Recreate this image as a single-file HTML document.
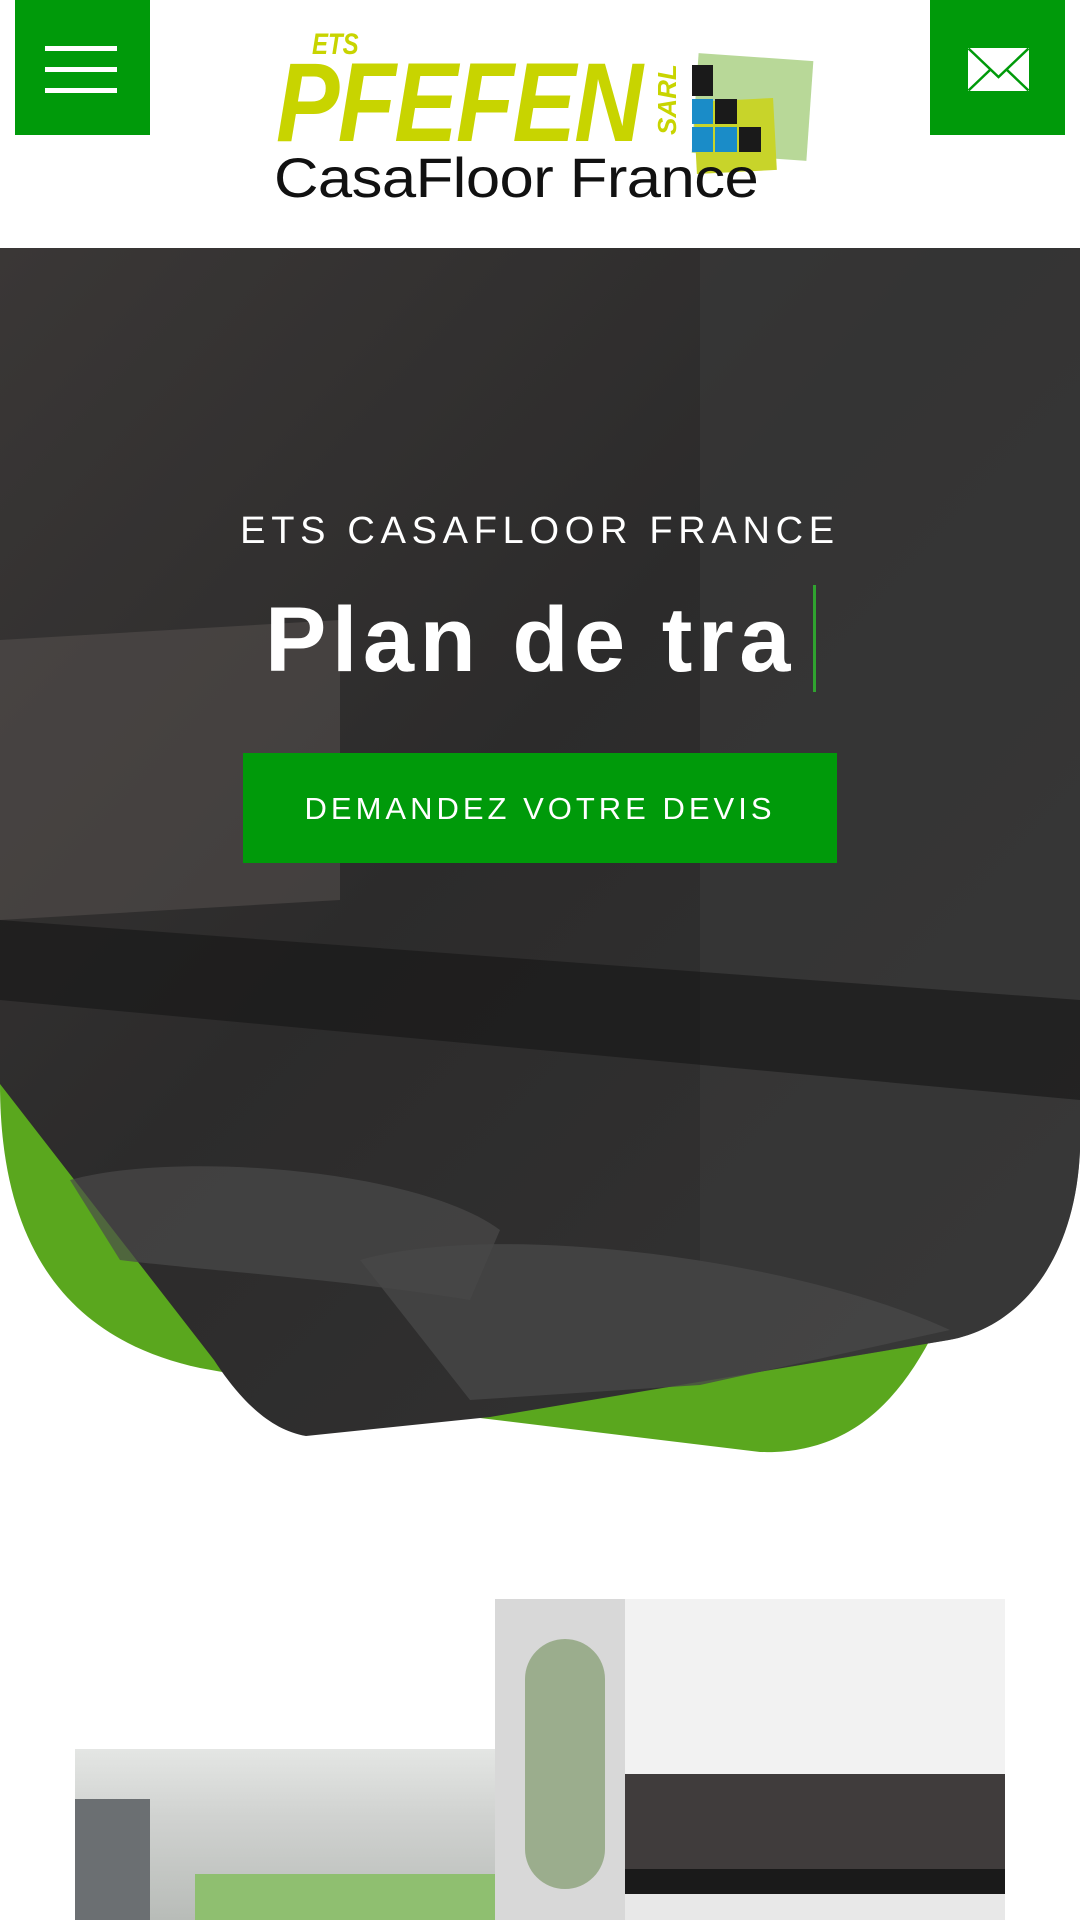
<!DOCTYPE html>
<html><head><meta charset="utf-8"><style>
*{margin:0;padding:0;box-sizing:border-box}
html,body{width:1080px;height:1920px;overflow:hidden;background:#fff;font-family:"Liberation Sans",sans-serif}
.btn{position:absolute;top:0;width:135px;height:135px;background:#009a0a}
.abs{position:absolute}
</style></head><body>
<div class="btn" style="left:15px">
 <div class="abs" style="left:30px;top:46px;width:72px;height:5px;background:#fff"></div>
 <div class="abs" style="left:30px;top:67px;width:72px;height:5px;background:#fff"></div>
 <div class="abs" style="left:30px;top:88px;width:72px;height:5px;background:#fff"></div>
</div>
<div class="btn" style="left:930px">
 <svg class="abs" style="left:37px;top:47px" width="63" height="45" viewBox="0 0 63 45"><rect x="1.5" y="1.5" width="60" height="42" fill="#fff" stroke="#fff"/><path d="M1.5 1.5 L31.5 30 L61.5 1.5 M1.5 43.5 L24 22 M61.5 43.5 L39 22" stroke="#009a0a" stroke-width="2.5" fill="none"/></svg>
</div>
<!-- logo -->
<div class="abs" style="left:695px;top:57px;width:115px;height:100px;background:#b8d898;transform:rotate(4deg)"></div>
<div class="abs" style="left:695px;top:100px;width:80px;height:72px;background:#c8d42a;transform:rotate(-3deg)"></div>
<div class="abs" style="left:692px;top:65px;width:21px;height:31px;background:#1a1a1a"></div>
<div class="abs" style="left:692px;top:99px;width:21px;height:25px;background:#1a8cc8"></div>
<div class="abs" style="left:715px;top:99px;width:22px;height:25px;background:#1a1a1a"></div>
<div class="abs" style="left:692px;top:127px;width:21px;height:25px;background:#1a8cc8"></div>
<div class="abs" style="left:715px;top:127px;width:22px;height:25px;background:#1a8cc8"></div>
<div class="abs" style="left:739px;top:127px;width:22px;height:25px;background:#1a1a1a"></div>
<div class="abs" style="left:312px;top:28px;font-size:30px;font-style:italic;font-weight:bold;color:#c8d400;transform:scaleX(.8);transform-origin:left">ETS</div>
<div class="abs" style="left:276px;top:47px;font-size:112px;font-weight:bold;font-style:italic;color:#c8d400;letter-spacing:-2px;transform:scaleX(.85);transform-origin:left;line-height:1">PFEFEN</div>
<div class="abs" style="left:652px;top:135px;font-size:26px;font-weight:bold;font-style:italic;color:#c8d400;transform:rotate(-90deg);transform-origin:left top;">SARL</div>
<div class="abs" style="left:274px;top:150px;font-size:56px;color:#111;transform:scaleX(1.1);transform-origin:left;line-height:1;letter-spacing:-0.5px">CasaFloor France</div>
<!-- hero -->
<svg class="abs" style="left:0;top:248px" width="1080" height="1220" viewBox="0 248 1080 1220">
<defs>
<linearGradient id="g" x1="0" y1="0" x2="1" y2="1"><stop offset="0" stop-color="#3a3736"/><stop offset=".45" stop-color="#2c2b2b"/><stop offset="1" stop-color="#343434"/></linearGradient>
</defs>
<path d="M0 1084 C0 1250 70 1340 200 1368 L480 1418 L760 1452 C850 1455 900 1400 935 1330 L935 1100 Z" fill="#5aa71e"/>
<path d="M0 248 H1080 V1151 C1075 1260 1020 1330 943 1341 L490 1417 L306 1436 C270 1430 240 1400 214 1360 L0 1084 Z" fill="url(#g)"/>
<path d="M700 248 H1080 V1151 C1075 1260 1020 1330 943 1341 L700 1382 Z" fill="#3a3a3a" opacity=".6"/>
<path d="M0 640 L340 620 L340 900 L0 920 Z" fill="#5a5452" opacity=".5"/>
<path d="M0 920 L1080 1000 L1080 1100 L0 1000 Z" fill="#161616" opacity=".6"/>
<path d="M70 1180 C180 1150 420 1170 500 1230 L470 1300 C350 1280 200 1270 120 1260 Z" fill="#4a4a4a" opacity=".7"/>
<path d="M360 1260 C500 1220 800 1260 950 1330 L700 1385 L470 1400 Z" fill="#474747" opacity=".8"/>
</svg>
<div class="abs" style="left:0;width:1080px;top:510px;text-align:center;color:#fff;font-size:38px;letter-spacing:5.7px">ETS CASAFLOOR FRANCE</div>
<div class="abs" style="left:265px;top:588px;color:#fff;font-size:92px;font-weight:bold;letter-spacing:5.5px;line-height:105px">Plan de tra</div>
<div class="abs" style="left:813px;top:585px;width:3px;height:107px;background:#2fa32f"></div>
<div class="abs" style="left:243px;top:753px;width:594px;height:110px;background:#009a0a;color:#fff;font-size:31px;letter-spacing:4px;text-align:center;line-height:112px">DEMANDEZ VOTRE DEVIS</div>
<!-- images -->
<div class="abs" style="left:75px;top:1749px;width:420px;height:171px;background:linear-gradient(180deg,#e4e6e4 0,#d0d2d0 40%,#b8bcb8 100%)">
 <div class="abs" style="left:0;top:50px;width:75px;height:121px;background:#6b6f72"></div>
 <div class="abs" style="left:120px;top:125px;width:300px;height:46px;background:#8fbf70"></div>
</div>
<div class="abs" style="left:495px;top:1599px;width:510px;height:321px;background:#f2f2f2">
 <div class="abs" style="left:0;top:0;width:130px;height:321px;background:#d8d8d8"></div>
 <div class="abs" style="left:130px;top:175px;width:380px;height:105px;background:#403c3c"></div>
 <div class="abs" style="left:130px;top:270px;width:380px;height:25px;background:#1a1a1a"></div>
 <div class="abs" style="left:130px;top:295px;width:380px;height:26px;background:#e8e8e8"></div>
 <div class="abs" style="left:30px;top:40px;width:80px;height:250px;background:#6a8a50;opacity:.55;border-radius:40px"></div>
</div>
</body></html>
